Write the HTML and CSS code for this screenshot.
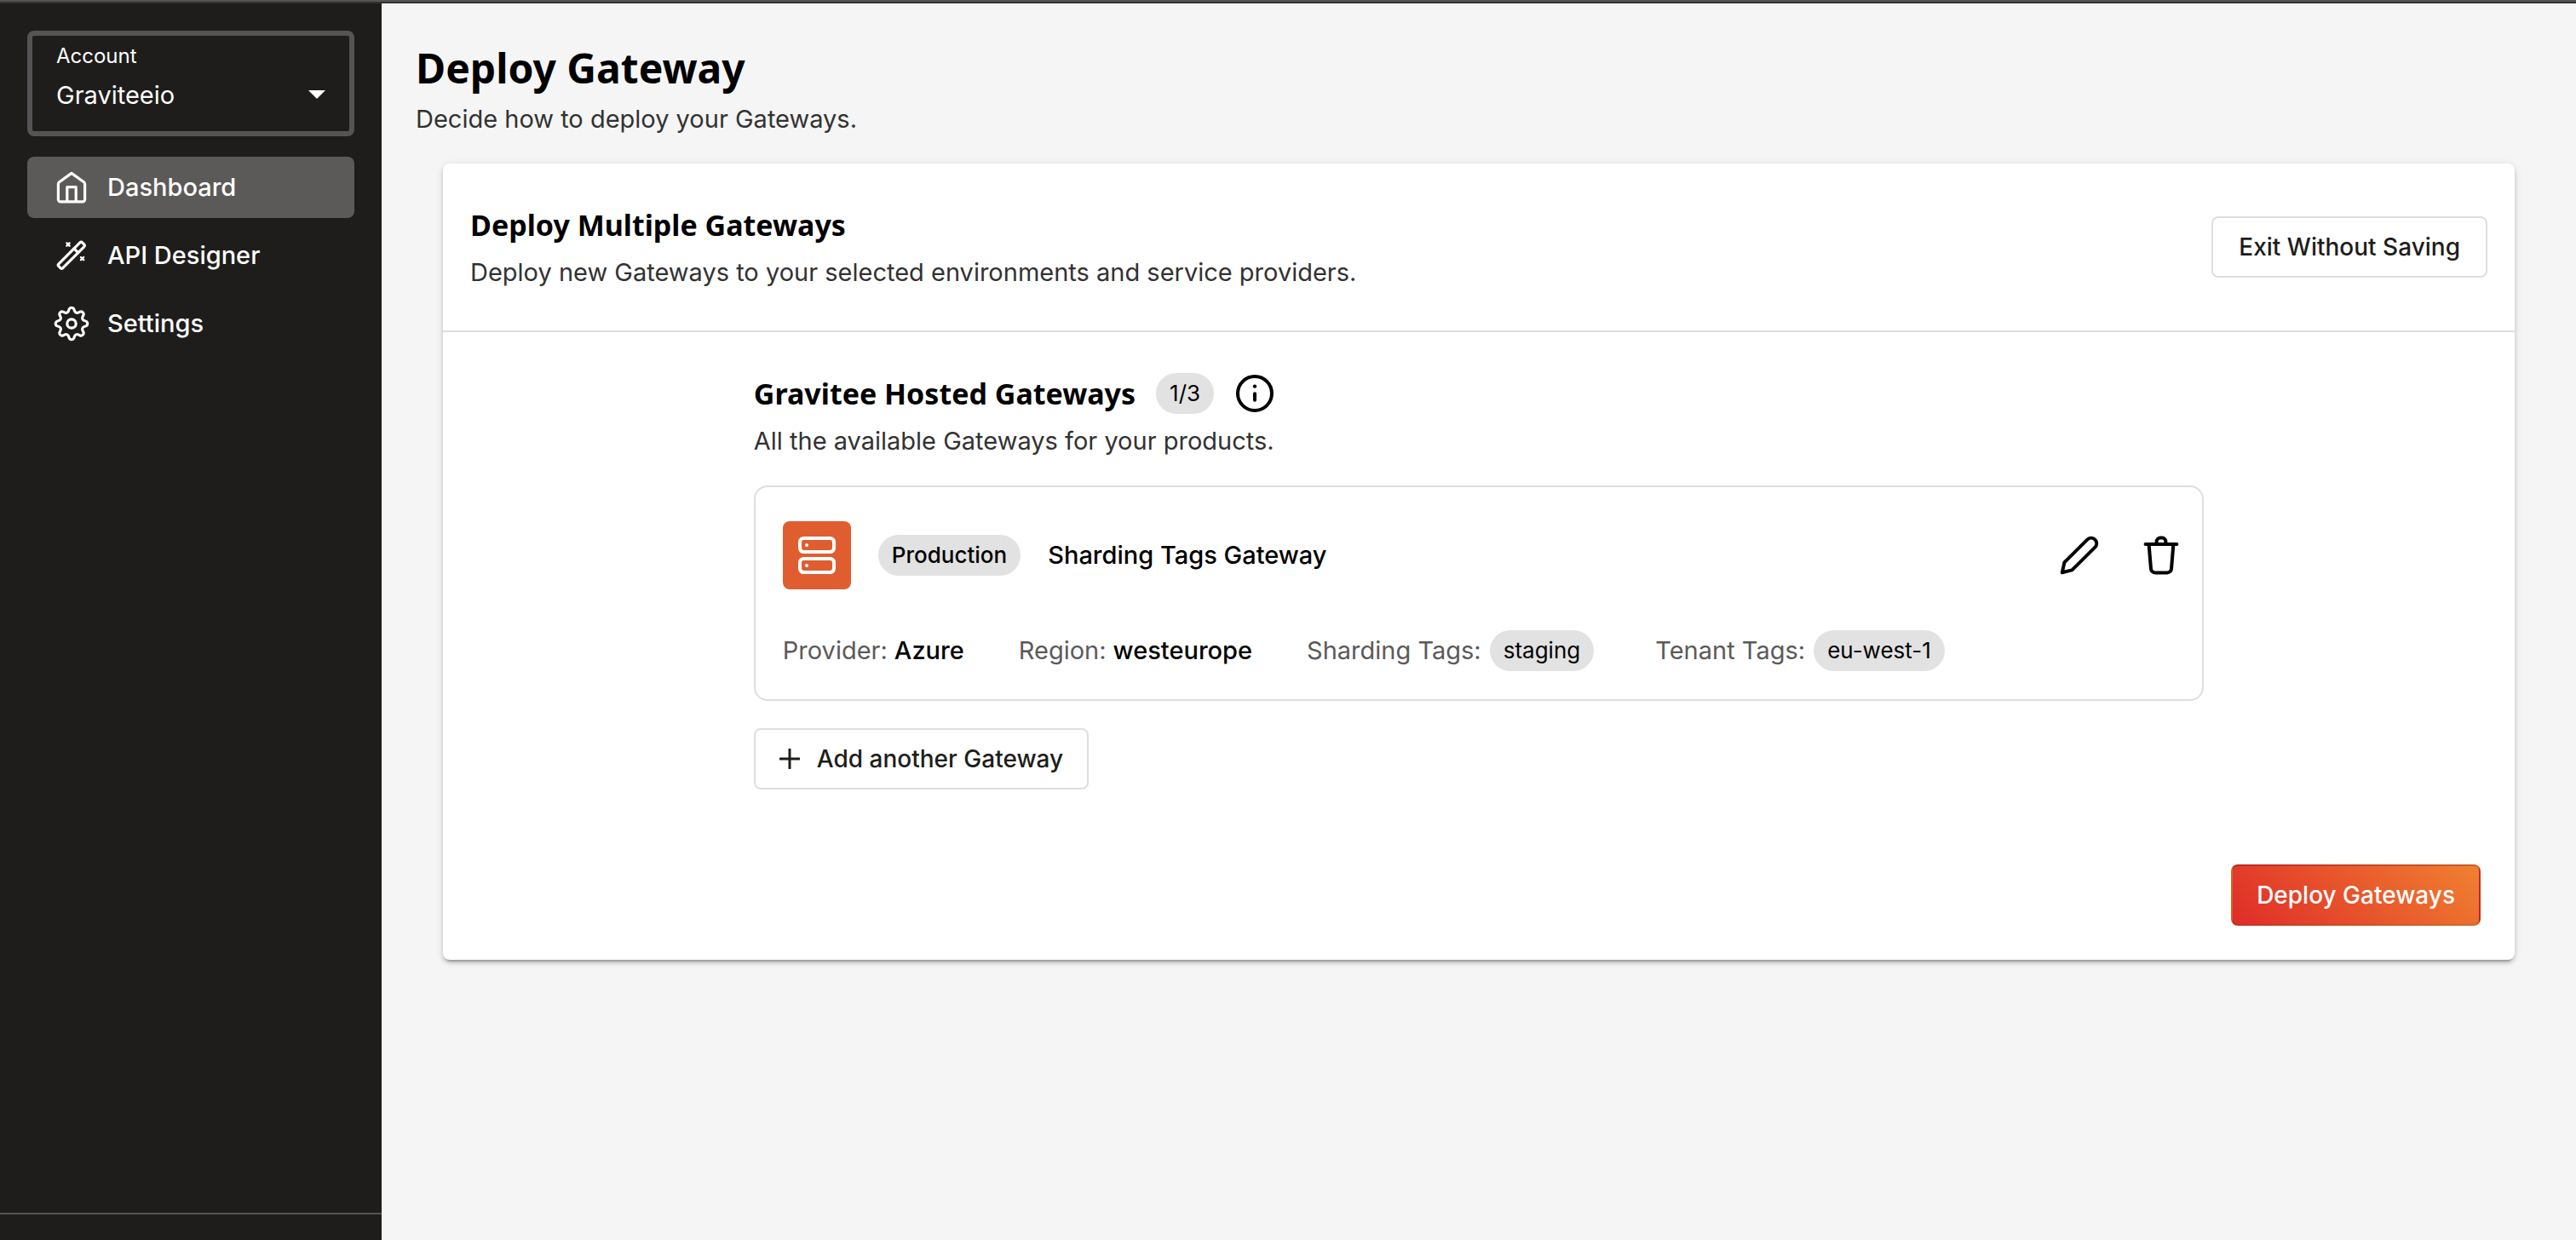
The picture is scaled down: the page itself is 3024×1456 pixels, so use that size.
FILE: index.html
```html
<!DOCTYPE html>
<html lang="en">
<head>
<meta charset="utf-8">
<meta name="viewport" content="width=device-width, initial-scale=1">
<title>Deploy Gateway</title>
<link rel="stylesheet" href="styles.css">
</head>
<body>
<div class="topbar"></div>
<div class="layout">
  <aside class="sidebar">
    <div class="account">
      <label class="account-label" for="account">Account</label>
      <div class="account-row">
        <select class="account-select" id="account"><option>Graviteeio</option></select>
        <svg class="caret" viewBox="0 0 20 10" aria-hidden="true"><path d="M0 0h20L10 10z"/></svg>
      </div>
    </div>
    <nav class="nav">
      <a class="nav-link active" href="#dashboard">
        <svg class="icon thin" viewBox="0 0 24 24" aria-hidden="true"><path d="M12 3.7l7.2 5.2c.4.3.6.7.6 1.2v9a1.3 1.3 0 0 1-1.3 1.3h-13a1.3 1.3 0 0 1-1.3-1.3v-9c0-.5.2-.9.6-1.2z"/><path d="M9.4 20.2v-8.4h5.2v8.4"/></svg>
        Dashboard
      </a>
      <a class="nav-link" href="#designer">
        <svg class="icon thin" viewBox="0 0 24 24" aria-hidden="true"><g transform="rotate(-45 11.9 11.9)"><rect x="2.1" y="10.2" width="19.6" height="3.4" rx="1"/><path d="M15.8 10.2v3.4"/></g><path stroke-width="1.2" d="M9.2 4.7l1.6 1.6m0-1.6L9.2 6.3M17.5 13l1.6 1.6m0-1.6l-1.6 1.6"/></svg>
        API Designer
      </a>
      <a class="nav-link" href="#settings">
        <svg class="icon thin" viewBox="0 0 24 24" aria-hidden="true"><circle cx="12" cy="12" r="2.6"/><g transform="rotate(22.5 12 12) translate(12 12) scale(.78) translate(-12 -12)"><path stroke-width="2" d="M10.546 2.438a1.957 1.957 0 0 0 2.908 0L14.4 1.4a1.959 1.959 0 0 1 3.41 1.413l-.071 1.4a1.958 1.958 0 0 0 2.051 2.054l1.4-.071a1.959 1.959 0 0 1 1.41 3.41l-1.042.94a1.96 1.96 0 0 0 0 2.909l1.042.94a1.959 1.959 0 0 1-1.413 3.41l-1.4-.071a1.958 1.958 0 0 0-2.056 2.056l.071 1.4A1.959 1.959 0 0 1 14.4 22.6l-.941-1.041a1.959 1.959 0 0 0-2.908 0L9.606 22.6A1.959 1.959 0 0 1 6.2 21.192l.072-1.4a1.958 1.958 0 0 0-2.056-2.056l-1.4.071A1.958 1.958 0 0 1 1.4 14.4l1.041-.94a1.96 1.96 0 0 0 0-2.909L1.4 9.606A1.958 1.958 0 0 1 2.813 6.2l1.4.071a1.958 1.958 0 0 0 2.058-2.06L6.2 2.81A1.959 1.959 0 0 1 9.606 1.4z"/></g></svg>
        Settings
      </a>
    </nav>
    <div class="sidebar-footer"></div>
  </aside>

  <main class="main">
    <header class="page-header">
      <h1>Deploy Gateway</h1>
      <p class="subtitle">Decide how to deploy your Gateways.</p>
    </header>

    <section class="card">
      <header class="card-header">
        <div class="card-heading">
          <h2>Deploy Multiple Gateways</h2>
          <p class="subtitle">Deploy new Gateways to your selected environments and service providers.</p>
        </div>
        <button class="button" type="button">Exit Without Saving</button>
      </header>

      <div class="hosted">
        <div class="hosted-heading">
          <div class="hosted-title">
            <h2>Gravitee Hosted Gateways</h2>
            <span class="chip">1/3</span>
            <svg class="icon" viewBox="0 0 24 24" role="img" aria-label="Information"><circle cx="12" cy="12" r="10"/><path d="M12 12.1v3.8"/><circle class="dot" cx="12" cy="7.8" r="1.1"/></svg>
          </div>
          <p class="subtitle">All the available Gateways for your products.</p>
        </div>

        <article class="gateway">
          <div class="gateway-head">
            <span class="gateway-icon">
              <svg class="icon" viewBox="0 0 24 24" aria-hidden="true"><rect x="2" y="2" width="20" height="8" rx="2.2"/><rect x="2" y="14" width="20" height="8" rx="2.2"/><circle class="dot" cx="6" cy="6" r="1"/><circle class="dot" cx="6" cy="18" r="1"/></svg>
            </span>
            <span class="chip strong">Production</span>
            <h3>Sharding Tags Gateway</h3>
            <div class="actions">
              <button class="icon-button" type="button" aria-label="Edit gateway">
                <svg class="icon" viewBox="0 0 24 24" aria-hidden="true"><path d="M1.9 22.1l1.3-5.9L16.9 2.6a3.2 3.2 0 0 1 4.5 4.5L7.7 20.7z"/></svg>
              </button>
              <button class="icon-button" type="button" aria-label="Delete gateway">
                <svg class="icon" viewBox="0 0 24 24" aria-hidden="true"><path d="M2.8 5.5h18.4M4.8 5.5L6 20a2.4 2.4 0 0 0 2.4 2.2h7.2A2.4 2.4 0 0 0 18 20l1.2-14.5M9.3 5.5V4a2.2 2.2 0 0 1 2.2-2.2h1A2.2 2.2 0 0 1 14.7 4v1.5"/></svg>
              </button>
            </div>
          </div>
          <dl class="details">
            <div class="detail"><dt>Provider:</dt><dd>Azure</dd></div>
            <div class="detail"><dt>Region:</dt><dd>westeurope</dd></div>
            <div class="detail tags"><dt>Sharding Tags:</dt><dd class="chip">staging</dd></div>
            <div class="detail tags"><dt>Tenant Tags:</dt><dd class="chip">eu-west-1</dd></div>
          </dl>
        </article>

        <button class="button add" type="button">
          <svg class="plus" viewBox="0 0 24 24" aria-hidden="true"><path d="M12 1v22M1 12h22"/></svg>
          Add another Gateway
        </button>
      </div>

      <footer class="card-footer">
        <button class="button primary" type="button">Deploy Gateways</button>
      </footer>
    </section>
  </main>
</div>
</body>
</html>
```
FILE: styles.css
```css
* {
  box-sizing: border-box;
}

body {
  margin: 0;
  min-height: 100vh;
  display: flex;
  flex-direction: column;
  background: #f5f5f5;
  color: #000;
  font-family: Inter, sans-serif;
  font-size: 29px;
  line-height: 40px;
}

h1, h2, h3, p, dl, dd {
  margin: 0;
}

h1, h2 {
  font-family: "Noto Sans", sans-serif;
  font-weight: 700;
}

h1 {
  font-size: 48px;
  line-height: 56px;
}

h2 {
  font-size: 34px;
  line-height: 48px;
}

h3 {
  font-size: 29px;
  font-weight: 500;
  line-height: 40px;
}

button, select {
  font-family: inherit;
  cursor: pointer;
}

.topbar {
  height: 4px;
  background: #555354;
  border-bottom: 2px solid #333132;
}

.layout {
  flex: 1;
  display: flex;
}

/* Icons */

.icon {
  flex: none;
  width: 48px;
  height: 48px;
  fill: none;
  stroke: currentColor;
  stroke-width: 2;
  stroke-linecap: round;
  stroke-linejoin: round;
}

.icon.thin {
  stroke-width: 1.6;
}

.dot {
  fill: currentColor;
  stroke: none;
}

/* Sidebar */

.sidebar {
  flex: none;
  width: 448px;
  padding-top: 32px;
  display: flex;
  flex-direction: column;
  gap: 24px;
  background: #1e1d1b;
  color: #fff;
}

.account {
  margin: 0 32px;
  padding: 8px 28px 22px;
  display: flex;
  flex-direction: column;
  gap: 8px;
  border: 6px solid #555354;
  border-radius: 8px;
}

.account-label {
  font-size: 24px;
  line-height: 32px;
}

.account-row {
  display: flex;
  align-items: center;
}

.account-select {
  flex: 1;
  min-width: 0;
  height: 42px;
  padding: 0;
  appearance: none;
  border: 0;
  background: transparent;
  color: inherit;
  font-size: 29px;
}

.caret {
  width: 20px;
  height: 10px;
  fill: currentColor;
}

.nav {
  flex: 1;
  padding: 0 32px;
  display: flex;
  flex-direction: column;
  gap: 8px;
}

.nav-link {
  height: 72px;
  padding: 0 28px;
  display: flex;
  align-items: center;
  gap: 18px;
  border-radius: 8px;
  color: inherit;
  font-size: 29px;
  font-weight: 500;
  text-decoration: none;
}

.nav-link.active {
  background: #5b5a58;
}

.sidebar-footer {
  height: 32px;
  border-top: 2px solid #555453;
}

/* Page */

.main {
  flex: 1;
  min-width: 0;
  padding: 48px 72px 72px;
}

.page-header {
  margin-left: -32px;
  margin-bottom: 32px;
  display: flex;
  flex-direction: column;
  gap: 12px;
}

.subtitle {
  color: #323232;
}

.card {
  border-radius: 8px;
  background: #fff;
  box-shadow: 0 6px 2px -4px rgba(0, 0, 0, .2), 0 4px 4px rgba(0, 0, 0, .14), 0 2px 10px rgba(0, 0, 0, .12);
}

.card-header {
  padding: 48px 32px;
  display: flex;
  align-items: center;
  justify-content: space-between;
  border-bottom: 2px solid #dedede;
}

.card-heading, .hosted-heading {
  display: flex;
  flex-direction: column;
  gap: 12px;
}

.card-footer {
  padding: 0 40px 40px;
  display: flex;
  justify-content: flex-end;
}

/* Buttons */

.button {
  height: 72px;
  padding: 0 30px;
  display: flex;
  align-items: center;
  border: 2px solid #dedede;
  border-radius: 8px;
  background: #fff;
  color: #1e1d1b;
  font-size: 28px;
  font-weight: 500;
}

.button.add {
  padding: 0 28px;
  gap: 20px;
}

.button.primary {
  padding: 0 28px;
  border-color: rgba(0, 0, 0, .14);
  background-color: transparent;
  background-image: linear-gradient(45deg, #df2c28, #f08030);
  color: #fff;
}

.plus {
  width: 24px;
  height: 24px;
  fill: none;
  stroke: currentColor;
  stroke-width: 3;
  stroke-linecap: round;
}

.icon-button {
  padding: 0;
  display: flex;
  border: 0;
  background: none;
  color: inherit;
}

/* Hosted gateways */

.hosted {
  width: 70%;
  margin: 0 auto;
  padding: 48px 0 88px;
  display: flex;
  flex-direction: column;
  align-items: flex-start;
  gap: 32px;
}

.hosted-title {
  display: flex;
  align-items: center;
  gap: 24px;
}

.chip {
  height: 48px;
  padding: 0 16px;
  border-radius: 24px;
  background: #e2e2e2;
  font-size: 26px;
  line-height: 48px;
}

.chip.strong {
  font-weight: 500;
}

.gateway {
  width: 100%;
  padding: 40px 24px 33px 32px;
  display: flex;
  flex-direction: column;
  gap: 48px;
  border: 2px solid #dedede;
  border-radius: 16px;
}

.gateway-head {
  display: flex;
  align-items: center;
  gap: 32px;
}

.gateway-icon {
  padding: 16px;
  display: flex;
  border-radius: 8px;
  background: #e05d30;
  color: #fff;
}

.actions {
  margin-left: auto;
  display: flex;
  gap: 48px;
}

.details {
  display: flex;
  align-items: center;
  gap: 64px;
}

.detail {
  display: flex;
  align-items: center;
  gap: 8px;
}

.detail dd {
  font-weight: 500;
}

.detail dt {
  color: #5b5a5b;
}

.detail .chip {
  font-weight: 400;
}

.detail.tags {
  margin-right: 8px;
  gap: 10px;
}
```
